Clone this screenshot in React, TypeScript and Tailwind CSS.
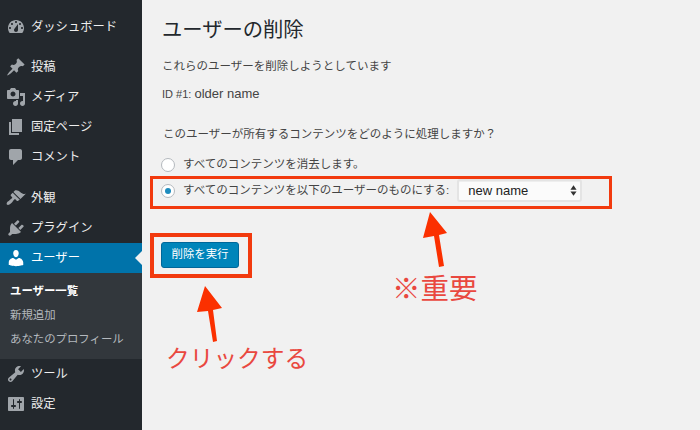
const jp = 'font-["Liberation_Sans","Noto_Sans_CJK_JP",sans-serif]';

const icons = {
  dashboard:
    'M3.76 16h12.48c1.1-1.37 1.76-3.11 1.76-5 0-4.42-3.58-8-8-8s-8 3.58-8 8c0 1.89.66 3.63 1.76 5zM10 4c.55 0 1 .45 1 1s-.45 1-1 1-1-.45-1-1 .45-1 1-1zM6 6c.55 0 1 .45 1 1s-.45 1-1 1-1-.45-1-1 .45-1 1-1zm8 0c.55 0 1 .45 1 1s-.45 1-1 1-1-.45-1-1 .45-1 1-1zm-5.37 5.55L12 7v6c0 1.1-.9 2-2 2s-2-.9-2-2c0-.57.24-1.08.63-1.45zM4 10c.55 0 1 .45 1 1s-.45 1-1 1-1-.45-1-1 .45-1 1-1zm12 0c.55 0 1 .45 1 1s-.45 1-1 1-1-.45-1-1 .45-1 1-1z',
  post: 'M10.44 3.02l1.82-1.82 6.36 6.35-1.83 1.82c-1.05-.68-2.48-.57-3.41.36l-.75.75c-.92.93-1.04 2.35-.35 3.41l-1.83 1.82-2.41-2.41-2.8 2.79c-.42.42-3.38 2.71-3.8 2.29s1.86-3.39 2.28-3.81l2.79-2.79L4.1 9.36l1.83-1.82c1.05.69 2.48.57 3.4-.36l.75-.75c.93-.92 1.05-2.35.36-3.41z',
  media:
    'M13 11V4c0-.55-.45-1-1-1h-1.67L9 1H5L3.67 3H2c-.55 0-1 .45-1 1v7c0 .55.45 1 1 1h10c.55 0 1-.45 1-1zM7 4.5c1.38 0 2.5 1.12 2.5 2.5S8.38 9.5 7 9.5 4.5 8.38 4.5 7 5.62 4.5 7 4.5zM14 6h5v10.5c0 1.38-1.12 2.5-2.5 2.5S14 17.88 14 16.5s1.12-2.5 2.5-2.5c.17 0 .34.02.5.05V9h-3V6zm-4 8.05V13h2v3.5c0 1.38-1.12 2.5-2.5 2.5S7 17.88 7 16.5 8.12 14 9.5 14c.17 0 .34.02.5.05z',
  page: 'M6 15V2h10v13H6zm-1 1h8v2H3V5h2v11z',
  comment: 'M5 2h9c1.1 0 2 .9 2 2v7c0 1.1-.9 2-2 2h-2l-5 5v-5H5c-1.1 0-2-.9-2-2V4c0-1.1.9-2 2-2z',
  appearance:
    'M14.48 11.06L7.41 3.99l1.5-1.5c.5-.56 2.3-.47 3.51.32 1.21.8 1.43 1.28 2.91 2.1 1.18.64 2.45 1.26 4.45.85zm-.71.71L6.7 4.7 4.93 6.47c-.39.39-.39 1.02 0 1.41l1.06 1.06c.39.39.39 1.03 0 1.42-.6.6-1.43 1.11-2.21 1.69-.35.26-.7.53-1.01.84C1.43 13.23.01 15.6 1 16.6c1 .99 3.36-.43 4.7-1.77.31-.31.58-.66.84-1.01.58-.78 1.09-1.61 1.69-2.21.39-.39 1.02-.39 1.41 0l1.06 1.06c.39.39 1.02.39 1.41 0z',
  plugin:
    'M13.11 4.36L9.87 7.6 8 5.73l3.24-3.24c.35-.34 1.05-.2 1.56.32.52.51.66 1.21.31 1.55zm-8 1.77l.91-1.12 9.01 9.01-1.19.84c-.71.71-2.63 1.16-3.82 1.16H6.14L4.9 17.26c-.59.59-1.54.59-2.12 0-.59-.58-.59-1.53 0-2.12l1.24-1.24v-3.88c0-1.13.4-3.19 1.09-3.89zm7.26 3.97l3.24-3.24c.34-.35 1.04-.21 1.55.31.52.51.66 1.21.31 1.55l-3.24 3.25z',
  user: 'M10 9.25c-2.27 0-2.73-3.44-2.73-3.44C7 4.02 7.82 2 9.97 2c2.16 0 2.98 2.02 2.71 3.81 0 0-.41 3.44-2.68 3.44zm0 2.57L12.72 10c2.39 0 4.52 2.33 4.52 4.53v2.49s-3.65 1.13-7.24 1.13c-3.65 0-7.24-1.13-7.24-1.13v-2.49c0-2.25 1.94-4.48 4.47-4.48z',
  tools:
    'M16.68 9.77c-1.34 1.34-3.3 1.67-4.95.99l-5.41 6.52c-.99.99-2.59.99-3.58 0s-.99-2.59 0-3.57l6.52-5.42c-.68-1.65-.35-3.61.99-4.95 1.28-1.28 3.12-1.62 4.72-1.06l-2.89 2.89 2.82 2.82 2.86-2.87c.53 1.58.18 3.39-1.08 4.65zM3.81 16.21c.4.39 1.04.39 1.43 0 .4-.4.4-1.04 0-1.43-.39-.4-1.03-.4-1.43 0-.39.39-.39 1.03 0 1.43z',
  settings:
    'M18 16V4c0-.55-.45-1-1-1H3c-.55 0-1 .45-1 1v12c0 .55.45 1 1 1h14c.55 0 1-.45 1-1zM8 11h1c.55 0 1 .45 1 1s-.45 1-1 1H8v1.5c0 .28-.22.5-.5.5s-.5-.22-.5-.5V13H6c-.55 0-1-.45-1-1s.45-1 1-1h1V5.5c0-.28.22-.5.5-.5s.5.22.5.5V11zm5-2h-1c-.55 0-1-.45-1-1s.45-1 1-1h1V5.5c0-.28.22-.5.5-.5s.5.22.5.5V7h1c.55 0 1 .45 1 1s-.45 1-1 1h-1v5.5c0 .28-.22.5-.5.5s-.5-.22-.5-.5V9z',
};

const MenuItem = ({ icon, label, active }: { icon: keyof typeof icons; label: string; active?: boolean }) => (
  <div
    className={`relative flex h-[30px] items-center pl-[6px] text-[12.3px] ${
      active ? 'bg-[#0073aa] text-white' : 'text-[#eeeeee]'
    }`}
  >
    <svg viewBox="0 0 20 20" className={`h-[20px] w-[20px] shrink-0 ${active ? 'fill-white' : 'fill-[#a0a5aa]'}`}>
      <path d={icons[icon]} />
    </svg>
    <span className="ml-[5px] whitespace-nowrap">{label}</span>
    {active && (
      <span className="absolute right-0 top-[8px] h-0 w-0 border-y-[7px] border-r-[7px] border-y-transparent border-r-[#f1f1f1]" />
    )}
  </div>
);

const Sidebar = () => (
  <aside className="h-full w-[142px] shrink-0 bg-[#23282d] pt-[12px]">
    <MenuItem icon="dashboard" label="ダッシュボード" />
    <div className="mt-[10px]">
      <MenuItem icon="post" label="投稿" />
      <MenuItem icon="media" label="メディア" />
      <MenuItem icon="page" label="固定ページ" />
      <MenuItem icon="comment" label="コメント" />
    </div>
    <div className="mt-[11px]">
      <MenuItem icon="appearance" label="外観" />
      <MenuItem icon="plugin" label="プラグイン" />
      <MenuItem icon="user" label="ユーザー" active />
    </div>
    <div className="h-[86px] bg-[#32373c] pl-[10px] pt-[7px] text-[11.4px] text-[#b4b9be]">
      <div className="flex h-[24px] items-center font-bold text-white">ユーザー一覧</div>
      <div className="flex h-[24px] items-center">新規追加</div>
      <div className="flex h-[24px] items-center whitespace-nowrap">あなたのプロフィール</div>
    </div>
    <MenuItem icon="tools" label="ツール" />
    <MenuItem icon="settings" label="設定" />
  </aside>
);

const Annotations = () => (
  <>
    <div className="absolute left-[150px] top-[176px] h-[33px] w-[462px] border-[3px] border-[#f23a0e]" />
    <div className="absolute left-[150px] top-[233px] h-[45px] w-[102px] border-[4px] border-[#f23a0e]" />
    <svg viewBox="0 0 700 430" className="pointer-events-none absolute left-0 top-0 h-[430px] w-[700px]">
      <polygon points="430,212 447,233 439,235 444,266 439,267 434,236 423,238" fill="#fb3000" />
      <polygon points="205,286 222,308 213,310 217,341 213,342 208,311 197,312" fill="#fb3000" />
    </svg>
    <div className="absolute left-[392px] top-[270px] text-[28.5px] leading-[38px] text-[#e9483f]">※重要</div>
    <div className="absolute left-[166px] top-[343px] text-[23.7px] leading-[32px] text-[#e9483f]">クリックする</div>
  </>
);

export default function App() {
  return (
    <div className={`relative flex h-[430px] w-[700px] overflow-hidden bg-[#f1f1f1] ${jp}`}>
      <Sidebar />
      <main className="flex-1 pl-[19px] text-[11.5px] text-[#444444]">
        <h1 className="ml-[1px] mt-[16px] text-[20.3px] leading-[28px] text-[#23282d]">ユーザーの削除</h1>
        <p className="ml-[1px] mt-[13px] leading-[18px]">これらのユーザーを削除しようとしています</p>
        <p className="ml-[1px] mt-[10px] leading-[18px]">
          <span className="text-[11px]">ID #1: </span>
          <span className="text-[13px]">older name</span>
        </p>
        <p className="ml-[2px] mt-[22px] leading-[18px]">このユーザーが所有するコンテンツをどのように処理しますか？</p>
        <div className="mt-[13px] flex h-[18px] items-center">
          <span className="h-[14px] w-[14px] rounded-full border border-[#b4b9be] bg-white" />
          <span className="ml-[8px]">すべてのコンテンツを消去します。</span>
        </div>
        <div className="mt-[3px] flex h-[27px] items-center">
          <span className="flex h-[14px] w-[14px] items-center justify-center rounded-full border border-[#b4b9be] bg-white">
            <span className="h-[6px] w-[6px] rounded-full bg-[#1e8cbe]" />
          </span>
          <span className="ml-[8px] whitespace-nowrap">すべてのコンテンツを以下のユーザーのものにする:</span>
          <div className="relative ml-[8px] flex h-[23px] w-[125px] shrink-0 items-center rounded-[3px] border-2 border-[#e4e4e4] bg-[#fbfbfb] pl-[9px] text-[13px] text-[#222222] shadow-[inset_0_1px_0_#eeeeee]">
            new name
            <svg viewBox="0 0 8 12" className="absolute right-[3px] top-[4px] h-[11px] w-[7px] fill-[#333333]">
              <path d="M4 0l3.5 5H.5zM4 12L.5 7h7z" />
            </svg>
          </div>
        </div>
        <button className="mt-[38px] block h-[26px] w-[78px] rounded-[3px] border border-[#006799] bg-[#0085ba] text-center text-[11.4px] text-white">
          削除を実行
        </button>
      </main>
      <Annotations />
    </div>
  );
}
